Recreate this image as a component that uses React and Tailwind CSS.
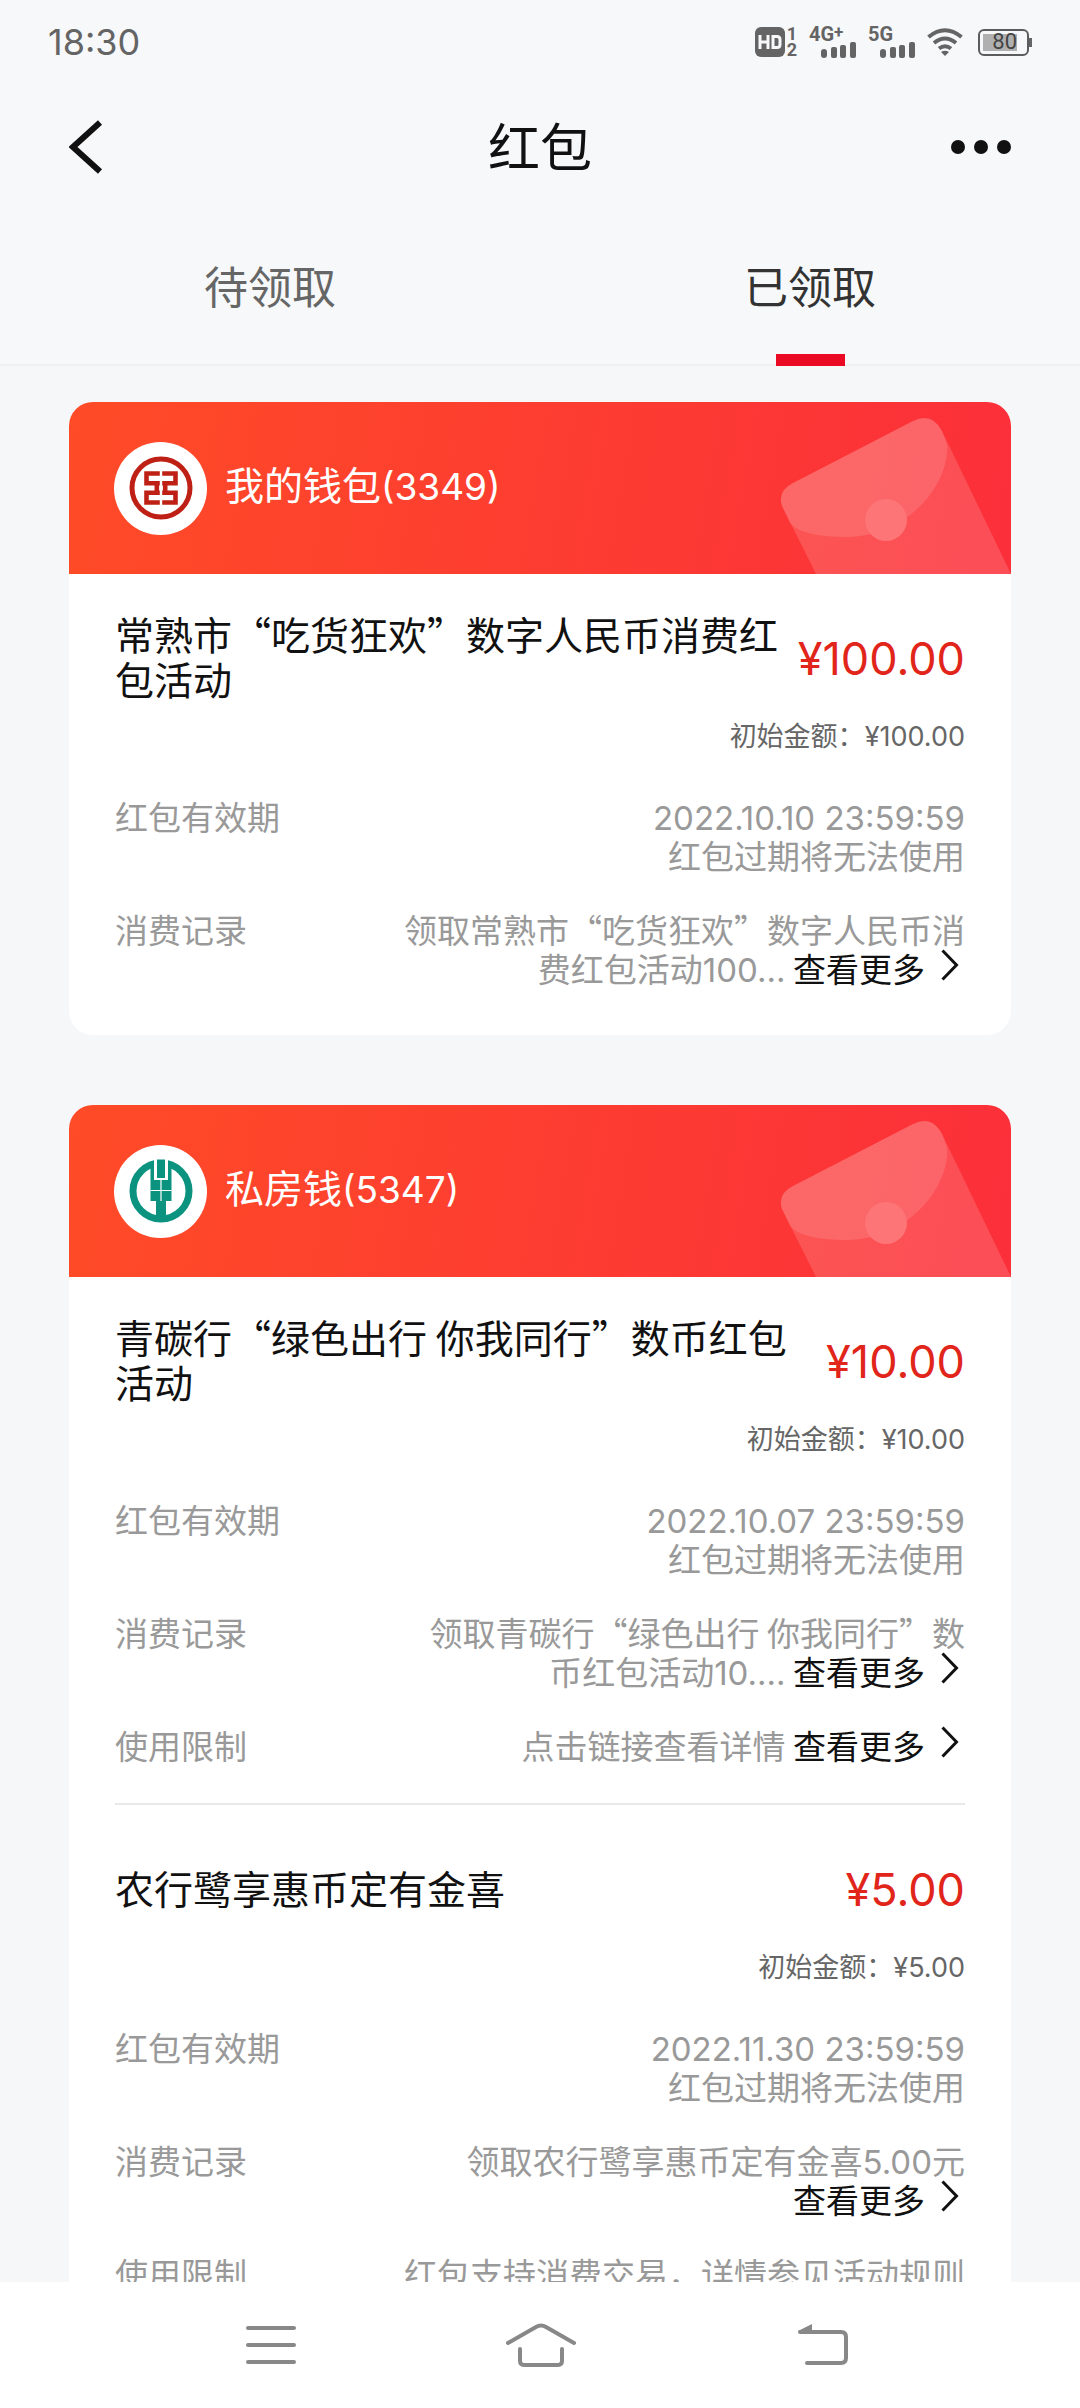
import React from "react";

const cards = [
  {
    name: "我的钱包",
    tail: "(3349)",
    logo: "icbc",
    items: [
      {
        title: "常熟市“吃货狂欢”数字人民币消费红包活动",
        amount: "¥100.00",
        expires: "2022.10.10 23:59:59",
        rows: [
          { label: "消费记录", text: "领取常熟市“吃货狂欢”数字人民币消费红包活动", figure: "100..." },
        ],
      },
    ],
  },
  {
    name: "私房钱",
    tail: "(5347)",
    logo: "abc",
    items: [
      {
        title: "青碳行“绿色出行 你我同行”数币红包活动",
        amount: "¥10.00",
        expires: "2022.10.07 23:59:59",
        rows: [
          { label: "消费记录", text: "领取青碳行“绿色出行 你我同行”数币红包活动", figure: "10...." },
          { label: "使用限制", text: "点击链接查看详情" },
        ],
      },
      {
        title: "农行鹭享惠币定有金喜",
        amount: "¥5.00",
        expires: "2022.11.30 23:59:59",
        rows: [
          { label: "消费记录", text: "领取农行鹭享惠币定有金喜", figure: "5.00", unit: "元" },
          { label: "使用限制", text: "红包支持消费交易，详情参见活动规则" },
        ],
      },
    ],
  },
];

function Signal({ label, plus }) {
  return (
    <span className="flex h-8 w-[48px] flex-col">
      <span className="flex h-4 items-start text-[20px] leading-4 font-bold">
        {label}
        {plus && <span className="text-[17px] leading-3">+</span>}
      </span>
      <svg viewBox="0 0 36 16" className="h-4 w-9 self-end" fill="currentColor" aria-hidden="true">
        <rect x="0" y="7" width="6" height="9" rx="3" />
        <rect x="10" y="5" width="6" height="11" rx="2" />
        <rect x="19" y="3" width="6" height="13" rx="2" />
        <rect x="29" y="0" width="6" height="16" rx="2" />
      </svg>
    </span>
  );
}

function StatusBar() {
  return (
    <div className="flex h-[84px] shrink-0 items-center justify-between px-12 text-[#646464]">
      <span className="font-['Inter',sans-serif] text-[36px] leading-none">18:30</span>
      <div className="flex items-center gap-[11px] font-['Roboto','Noto_Sans_CJK_SC',sans-serif]">
        <span className="flex items-center gap-px">
          <svg viewBox="0 0 30 30" className="size-[30px]" role="img" aria-label="HD">
            <rect width="30" height="30" rx="6" fill="currentColor" />
            <path d="M5 8v14M13 8v14M5 15h8" stroke="#f7f8fa" strokeWidth="3" fill="none" />
            <path d="M18 9.500h4q3 0 3 3v5q0 3-3 3h-4z" stroke="#f7f8fa" strokeWidth="3" fill="none" />
          </svg>
          <span className="flex w-3 flex-col text-center text-[18px] leading-4 font-bold">
            <span>1</span>
            <span>2</span>
          </span>
        </span>
        <Signal label="4G" plus />
        <Signal label="5G" />
        <svg viewBox="0 0 36 28" className="h-7 w-9" fill="none" stroke="currentColor" strokeWidth="4" role="img" aria-label="Wi-Fi">
          <path d="M1.500 9q16.500-13.500 33 0" />
          <path d="M7 15q11-9 22 0" />
          <path d="M12 20.500q6-4.500 12 0" />
          <path d="M14 24q4-2.500 8 0l-4 4z" fill="currentColor" stroke="none" />
        </svg>
        <span className="ml-1 flex items-center">
          <span className="flex h-[27px] w-[51px] rounded-md border-2 border-[#5c5c5c] p-[3px]">
            <span className="flex w-[34px] items-center justify-end bg-[#b0b0b0] text-[22px] leading-none text-[#444]">80</span>
          </span>
          <span className="h-[9px] w-[3px] bg-[#646464]" />
        </span>
      </div>
    </div>
  );
}

function Header() {
  return (
    <header className="flex h-[126px] shrink-0 items-center justify-between px-[69px] text-[#111]">
      <button type="button" aria-label="返回" className="w-[60px]">
        <svg viewBox="0 0 34 54" className="h-[54px] w-[34px]" fill="none" stroke="currentColor" strokeWidth="6">
          <path d="M31 2.500 4 27l27 24.500" />
        </svg>
      </button>
      <h1 className="pb-1 text-[52px] leading-none">红包</h1>
      <button type="button" aria-label="更多" className="flex w-[60px] justify-between">
        <span className="size-3.5 rounded-full bg-[#111]" />
        <span className="size-3.5 rounded-full bg-[#111]" />
        <span className="size-3.5 rounded-full bg-[#111]" />
      </button>
    </header>
  );
}

function Tabs() {
  return (
    <div role="tablist" className="flex h-[156px] shrink-0 border-b-2 border-[#eff0f2] text-[44px]">
      <button type="button" role="tab" aria-selected="false" className="flex-1 pb-1 text-[#666]">
        待领取
      </button>
      <button type="button" role="tab" aria-selected="true" className="relative flex-1 pb-1 text-[#333]">
        已领取
        <span className="absolute inset-x-0 -bottom-0.5 mx-auto h-3 w-[69px] bg-[#eb0a23]" />
      </button>
    </div>
  );
}

function IcbcLogo() {
  return (
    <svg viewBox="0 0 64 64" className="size-16" fill="none" stroke="#bf2015" aria-hidden="true">
      <circle cx="32" cy="32" r="29" strokeWidth="5" />
      <path d="M30.800 17.500H17.500V27.300H30.800M27.800 27V37M30.800 36.700H17.500V46.500H30.800" strokeWidth="4.600" />
      <path d="M33.200 17.500H46.500V27.300H33.200M36.200 27V37M33.200 36.700H46.500V46.500H33.200" strokeWidth="4.600" />
    </svg>
  );
}

function AbcLogo() {
  return (
    <svg viewBox="0 0 64 64" className="size-16" fill="none" aria-hidden="true">
      <circle cx="32" cy="32" r="28" stroke="#0b9380" strokeWidth="7" />
      <path d="M21.500 3h21v39H37v20H27V42h-5.500z" fill="#0b9380" />
      <path d="M25 0h14v21H25z" fill="#fff" />
      <path d="M28 0.500h8v18.500h-8z" fill="#0b9380" />
      <path d="M32 21v21M21.500 31.500h21" stroke="#fff" strokeWidth="1.200" />
    </svg>
  );
}

function Envelope() {
  return (
    <svg viewBox="0 0 232 171" className="absolute right-0 bottom-0 h-[171px] w-[232px]" fill="#fff" aria-hidden="true">
      <path d="M14 80 134 18Q153 9 163 28L232 171H37L3 103Q-2 88 14 80z" fillOpacity=".15" />
      <path d="M14 80 134 18Q153 9 163 28L168 42C171 78 132 133 68 134 40 134 20 130 11 120L3 103Q-2 88 14 80z" fillOpacity=".12" />
      <circle cx="107" cy="117" r="21" fill="#fd7577" />
    </svg>
  );
}

function Figure({ children }) {
  return <span className="font-['Inter',sans-serif] leading-none">{children}</span>;
}

function MoreLink() {
  return (
    <a href="#more" className="inline-flex h-[39px] items-start gap-4 pr-1.5 align-top whitespace-nowrap text-[#111]">
      查看更多
      <svg viewBox="0 0 18 32" className="h-8 w-[18px]" fill="none" stroke="currentColor" strokeWidth="3" aria-hidden="true">
        <path d="M1.500 1.500 15.500 16l-14 14.500" />
      </svg>
    </a>
  );
}

function Row({ label, children }) {
  return (
    <div className="flex justify-between">
      <dt>{label}</dt>
      <dd className="w-2/3 text-right">{children}</dd>
    </div>
  );
}

function Item({ title, amount, expires, rows }) {
  return (
    <li className="border-b-2 border-[#e9e9e9] pt-[37px] pb-[38px] last:border-b-0 last:pb-[47px]">
      <div className="flex min-h-[90px] items-center justify-between">
        <h3 className="max-w-[690px] text-[39px] leading-[45px] text-[#111]">{title}</h3>
        <strong className="shrink-0 pt-1.5 font-['Inter',sans-serif] text-[45px] leading-[60px] font-normal text-[#e1251b]">
          {amount}
        </strong>
      </div>
      <p className="mt-3.5 text-right text-[27px] leading-[39px] text-[#666]">
        初始金额：<Figure>{amount}</Figure>
      </p>
      <dl className="mt-[43px] flex flex-col gap-[35px] text-[33px] leading-[39px] text-[#999]">
        <Row label="红包有效期">
          <p>
            <Figure>{expires}</Figure>
          </p>
          <p>红包过期将无法使用</p>
        </Row>
        {rows.map((row) => (
          <Row key={row.label} label={row.label}>
            {row.text}
            {row.figure && <Figure>{row.figure}</Figure>}
            {row.unit} <MoreLink />
          </Row>
        ))}
      </dl>
    </li>
  );
}

function Card({ name, tail, logo, items }) {
  return (
    <section className="shrink-0 overflow-hidden rounded-3xl bg-white">
      <div className="relative flex h-[172px] items-center gap-[18px] bg-linear-[100deg] from-[#ff4b27] to-[#fb2f3a] px-[45px]">
        <Envelope />
        <span className="flex size-[93px] items-center justify-center rounded-full bg-white">
          {logo === "icbc" ? <IcbcLogo /> : <AbcLogo />}
        </span>
        <h2 className="pb-2 text-[39px] leading-none text-white">
          {name}
          <span className="font-['Inter',sans-serif] text-[37px]">{tail}</span>
        </h2>
      </div>
      <ul className="px-[46px]">
        {items.map((item) => (
          <Item key={item.title} {...item} />
        ))}
      </ul>
    </section>
  );
}

function NavBar() {
  return (
    <nav className="flex h-[126px] shrink-0 items-center justify-between bg-white pr-[231px] pl-[246px] text-[#888]">
      <button type="button" aria-label="最近任务">
        <svg viewBox="0 0 50 40" className="h-10 w-[50px]" fill="none" stroke="currentColor" strokeWidth="4" strokeLinecap="round">
          <path d="M2 3h46M2 20h46M2 37h46" />
        </svg>
      </button>
      <button type="button" aria-label="主屏幕" className="mr-3">
        <svg viewBox="0 0 70 44" className="h-11 w-[70px]" fill="none" stroke="currentColor" strokeWidth="4" strokeLinecap="round">
          <path d="M2 20 30 4q5-3 10 0l28 16" />
          <path d="M14 26v12q0 4 5 4h32q5 0 5-4V26" />
        </svg>
      </button>
      <button type="button" aria-label="返回上一级">
        <svg viewBox="0 0 52 44" className="h-11 w-[52px]" fill="none" stroke="currentColor" strokeWidth="4" strokeLinecap="round">
          <path d="M3 9h41q5 0 5 5v21q0 5-5 5H10" />
          <path d="M1 8 15 1v8z" fill="currentColor" stroke="none" />
        </svg>
      </button>
    </nav>
  );
}

export default function App() {
  return (
    <div lang="zh-CN" className="flex h-screen flex-col bg-[#f7f8fa] font-['Noto_Sans_CJK_SC',sans-serif]">
      <StatusBar />
      <Header />
      <Tabs />
      <main className="flex min-h-0 flex-1 flex-col gap-[70px] overflow-y-auto bg-[#f6f7f9] px-[69px] pt-9 [scrollbar-width:none]">
        {cards.map((card) => (
          <Card key={card.name} {...card} />
        ))}
      </main>
      <NavBar />
    </div>
  );
}
